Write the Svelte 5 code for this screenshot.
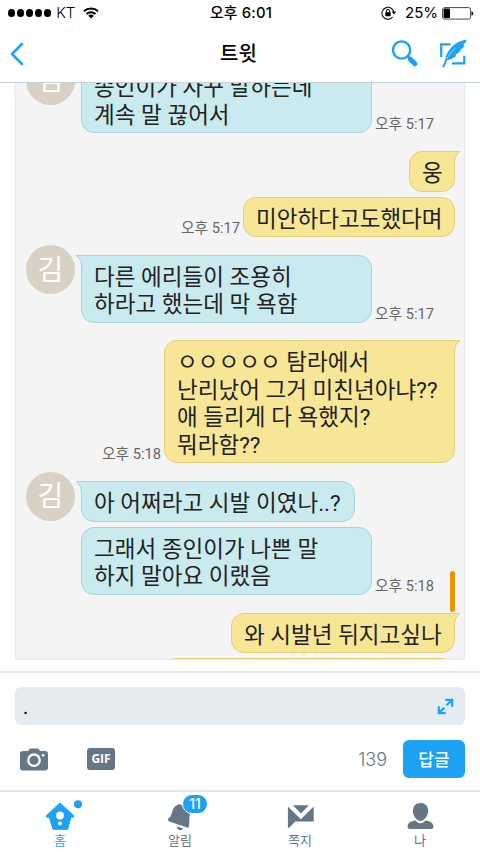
<script>
  const messages = [
    { side: 'left', gap: 0, avatar: true, tail: true, width: 291, lines: ['종인이가 자꾸 말하는데', '계속 말 끊어서'], time: '오후 5:17' },
    { side: 'right', gap: 18, tail: true, width: 46, lines: ['웅'] },
    { side: 'right', gap: 5, width: 212, lines: ['미안하다고도했다며'], time: '오후 5:17' },
    { side: 'left', gap: 17.5, avatar: true, tail: true, width: 291, lines: ['다른 에리들이 조용히', '하라고 했는데 막 욕함'], time: '오후 5:17' },
    { side: 'right', gap: 17.5, tail: true, width: 291, lines: ['ㅇㅇㅇㅇㅇ 탐라에서', '난리났어 그거 미친년아냐??', '애 들리게 다 욕했지?', '뭐라함??'], time: '오후 5:18' },
    { side: 'left', gap: 18, avatar: true, tail: true, width: 274, lines: ['아 어쩌라고 시발 이였나..?'] },
    { side: 'left', gap: 5, width: 291, lines: ['그래서 종인이가 나쁜 말', '하지 말아요 이랬음'], time: '오후 5:18' },
    { side: 'right', gap: 18, tail: true, width: 224, lines: ['와 시발년 뒤지고싶나'] },
    { side: 'right', gap: 5, width: 292, lines: [''] }
  ];
</script>

<div class="screen">
  <div class="status">
    <div class="carrier">
      <span class="dots"><i></i><i></i><i></i><i></i><i></i></span>
      <span class="kt">KT</span>
      <svg width="16" height="12" viewBox="0 0 16 12">
        <path d="M1 4.3A10.3 10.3 0 0 1 15 4.3M3.5 7A6.6 6.6 0 0 1 12.5 7" fill="none" stroke="#000" stroke-width="1.9" />
        <path d="M8 11.6 5.2 8.8A4 4 0 0 1 10.8 8.8Z" />
      </svg>
    </div>
    <div class="clock">오후 6:01</div>
    <div class="power">
      <svg width="16" height="14" viewBox="0 0 16 14">
        <path d="M11.6 11.2A6 6 0 1 1 13 7.3" fill="none" stroke="#111" stroke-width="1.1" />
        <path d="M10.6 5.6h4.6L13 8.6z" />
        <rect x="4.300" y="6.200" width="5.400" height="4" rx=".5" />
        <path d="M5.400 6.400V5a1.600 1.600 0 0 1 3.200 0v1.400" fill="none" stroke="#000" stroke-width="1" />
      </svg>
      <span class="percent">25%</span>
      <svg width="32" height="13" viewBox="0 0 32 13">
        <rect x=".6" y=".6" width="28" height="11.500" rx="2" fill="none" stroke="#333" stroke-width=".9" />
        <rect x="1.600" y="1.600" width="6.400" height="9.500" rx="1" />
        <path d="M29.500 4.200q1.800.5 1.800 2.200t-1.800 2.200z" />
      </svg>
    </div>
  </div>

  <header>
    <svg class="back" width="14" height="24" viewBox="0 0 14 24">
      <path d="M12 2 2 12 12 22" fill="none" stroke="#1da1f2" stroke-width="2.600" stroke-linecap="round" stroke-linejoin="round" />
    </svg>
    <h1>트윗</h1>
    <div class="tools">
      <svg width="26" height="27" viewBox="0 0 26 27">
        <circle cx="9.600" cy="10" r="8.600" fill="none" stroke="#1da1f2" stroke-width="2.400" />
        <path d="M15.700 16 18.500 19" stroke="#1da1f2" stroke-width="2.600" />
        <path d="M18.600 19.400 22.900 23.800" stroke="#1da1f2" stroke-width="5" stroke-linecap="round" />
      </svg>
      <svg width="28" height="29" viewBox="0 0 28 29">
        <path d="M11.500 5.400H2.200V18M25.300 16.800V24.300H13" fill="none" stroke="#1da1f2" stroke-width="2.200" />
        <path d="M27.600.6C20.800 1.800 15 5 10.900 10.200 7.300 14.500 6.700 18 6.300 20.600L3.200 28.100 5.100 28.400 8.200 21.200C12 20.500 15.500 18.700 17.700 16.400L15.900 16C19 14.600 21.200 12.900 22.200 11.100L20.600 10.900C23.300 9.600 24.800 8.200 25.500 6.400L24.100 6.100C26.100 4.700 27.300 2.900 27.600.6Z" fill="#1da1f2" />
        <path d="M7.700 20C9.900 15.800 12.900 12 16.600 8.900" fill="none" stroke="#fff" stroke-width=".6" />
      </svg>
    </div>
  </header>

  <main>
    <div class="chat">
      {#each messages as m}
        <div class="row {m.side}" style:margin-top="{m.gap}px">
          {#if m.avatar}<div class="avatar"><span>김</span></div>{/if}
          <div class="bubble" class:tailed={m.tail} style:width="{m.width}px">
            {#each m.lines as line}<div class="line">{line}</div>{/each}
            {#if m.tail}
              <svg class="tail" width="8" height="16" viewBox="0 0 8 16">
                <path class="tail-fill" d="M8 .5H1Q6.500 4 6.500 12V16H8Z" />
                <path class="tail-edge" d="M8 .5H1Q6.500 4 6.500 12V16" fill="none" />
              </svg>
            {/if}
          </div>
          {#if m.time}<time>{m.time}</time>{/if}
        </div>
      {/each}
      <div class="scrollbar"></div>
    </div>
  </main>

  <section class="composer">
    <div class="field">
      <span>.</span>
      <svg width="17" height="17" viewBox="0 0 17 17">
        <path d="M8.300 1.800h6.900v6.900M14.800 2.200 9.700 7.300M1.800 8.300v6.900h6.900M2.200 14.800 7.300 9.700" fill="none" stroke="#1da1f2" stroke-width="2.200" />
      </svg>
    </div>
    <div class="actions">
      <svg width="28" height="23" viewBox="0 0 28 23">
        <path d="M3 3h5l1.200-1.800Q9.600.5 10.500.5h7q.9 0 1.300.7L20 3h5q3 0 3 3v13.500q0 3-3 3H3q-3 0-3-3V6q0-3 3-3Z" fill="#657786" />
        <circle cx="14" cy="12.200" r="5.700" fill="none" stroke="#fff" stroke-width="2.300" />
        <circle cx="23.100" cy="7.300" r="1.400" fill="#fff" />
      </svg>
      <span class="gif">GIF</span>
      <span class="count">139</span>
      <button>답글</button>
    </div>
  </section>

  <nav>
    <div class="tab active">
      <svg width="44" height="32" viewBox="0 0 44 32">
        <path d="M22 4 36 17 34.700 18.600 33 17.800 29.700 30.300H15.200L11.100 18 9.300 18.600 8 17Z" fill="#1da1f2" stroke="#1da1f2" stroke-linejoin="round" />
        <circle cx="22" cy="16.500" r="3.900" fill="#fff" />
        <circle cx="22" cy="24.500" r="1.900" fill="#fff" />
        <circle cx="40" cy="5.200" r="4" fill="#1da1f2" />
      </svg>
      <span>홈</span>
    </div>
    <div class="tab">
      <svg width="44" height="32" viewBox="0 0 44 32">
        <path d="M10.300 19.600C15.500 16.400 12.500 8.500 20.300 5.400 22.100 4.700 25.500 7 27 8L32 15C30.800 19 31.800 22.500 31 27.400Q30.600 29 29 28.400L10.800 22.200Q9 20.900 10.300 19.600Z" fill="#657786" />
        <path d="M18.600 27.200 25.200 29.600Q23.800 31.900 21.300 31 18.800 30 18.600 27.200Z" fill="#657786" />
      </svg>
      <b class="badge">11</b>
      <span>알림</span>
    </div>
    <div class="tab">
      <svg width="44" height="32" viewBox="0 0 44 32">
        <path d="M9.900 7.500 22.800 20.300 35.700 7.500V22.500H17.300L11.100 28.700Q9.900 29.300 9.900 28Z" fill="#657786" />
        <path d="M15 6.200H31L22.800 14.400Z" fill="#657786" />
      </svg>
      <span>쪽지</span>
    </div>
    <div class="tab">
      <svg width="44" height="32" viewBox="0 0 44 32">
        <path d="M22.500 4c5 0 7.600 3.400 7.600 8.200 0 4.300-3.600 9.800-7.600 9.800s-7.600-5.500-7.600-9.800C14.900 7.400 17.500 4 22.500 4Z" fill="#657786" />
        <path d="M17.300 21.500Q22.500 27 27.500 21.500C32.500 22.200 35.400 23.800 35.400 28Q35.400 30 33.400 30H11.600Q9.600 30 9.600 28C9.600 23.800 12.500 22.200 17.300 21.500Z" fill="#657786" />
      </svg>
      <span>나</span>
    </div>
  </nav>
</div>

<style>
  :global(body) { margin: 0; background: #fff; }
  .screen { width: 480px; height: 854px; display: flex; flex-direction: column; overflow: hidden; background: #fff; font-family: Inter, "Noto Sans CJK KR", sans-serif; color: #000; }
  svg { display: block; flex: none; }
  .status { height: 26px; display: grid; grid-template-columns: 1fr auto 1fr; align-items: center; padding: 0 6px 0 8px; flex: none; }
  .carrier, .power { display: flex; align-items: center; }
  .dots { display: flex; gap: 1.8px; }
  .dots i { width: 7.2px; height: 7.2px; border-radius: 50%; background: #000; }
  .kt { font-size: 15px; margin: 0 8px 0 5px; line-height: 20px; font-weight: 300; }
  .clock { font-size: 14.8px; line-height: 20px; font-weight: 500; letter-spacing: .2px; }
  .power { justify-content: flex-end; }
  .percent { font-size: 15px; margin: 0 4px 0 8px; line-height: 20px; }
  header { height: 57px; box-sizing: border-box; flex: none; display: grid; grid-template-columns: 1fr auto 1fr; align-items: center; padding: 0 13px 1px 10px; border-bottom: 1px solid #c3d2de; }
  h1 { margin: 0; font-size: 20px; line-height: 28px; font-weight: 500; }
  .tools { display: flex; justify-content: flex-end; align-items: center; gap: 21px; }
  main { height: 590px; flex: none; padding: 0 15px; box-sizing: border-box; border-bottom: 2px solid #e1e8ed; }
  .chat { position: relative; height: 577px; overflow: hidden; box-sizing: border-box; background: #f4f4f4; border: solid #e4eaee; border-width: 0 1px 1px; padding: 0 9px 0 10px; display: flex; flex-direction: column; }
  .row { display: flex; align-items: flex-end; flex: none; position: relative; }
  .row:first-child { margin-top: -18px !important; }
  .row.left { padding-left: 55px; }
  .row.right { flex-direction: row-reverse; }
  .avatar { position: absolute; left: 0; top: -9.5px; width: 49px; height: 49px; border-radius: 50%; background: #d9d1c4; color: #fff; display: flex; align-items: center; justify-content: center; font: 28px/40px "Noto Sans CJK KR", sans-serif; }
  .avatar span { margin-top: -4px; }
  .bubble { --fill: #c9eaee; --edge: #a9d5da; position: relative; box-sizing: border-box; border: 1px solid var(--edge); border-radius: 13px; background: var(--fill); padding: 8px 0 3px 12px; font: 22.5px/27.5px Roboto, "Noto Sans CJK KR", sans-serif; letter-spacing: .03px; color: #222; white-space: nowrap; }
  .right .bubble { --fill: #f7e695; --edge: #e6cf78; }
  .line { height: 27.5px; }
  .left .tailed { border-top-left-radius: 0; }
  .right .tailed { border-top-right-radius: 0; }
  .tail { position: absolute; top: -1px; left: -7px; }
  .right .tail { left: auto; right: -7px; transform: scaleX(-1); }
  .tail-fill { fill: var(--fill); }
  .tail-edge { stroke: var(--edge); stroke-width: 1; }
  time { font: 14.7px/18px Roboto, "Noto Sans CJK KR", sans-serif; color: #666; margin: 0 3px 0 3px; white-space: nowrap; }
  .scrollbar { position: absolute; right: 9px; top: 488px; width: 5px; height: 41px; border-radius: 3px; background: #e69500; }
  .composer { height: 119px; flex: none; padding: 14px 15px 0; box-sizing: border-box; border-bottom: 2px solid #e1e8ed; }
  .field { height: 38px; box-sizing: border-box; border-radius: 6px; background: #e6ebef; display: flex; align-items: center; justify-content: space-between; padding: 0 11px 0 8px; font: 20px/24px Roboto, sans-serif; }
  .field span { padding-top: 1px; }
  .actions { display: flex; align-items: center; height: 38px; margin-top: 15px; padding-left: 5px; }
  .gif { width: 28px; height: 22px; border-radius: 3px; background: #657786; color: #fff; font: 700 12px/22px "Open Sans", sans-serif; text-align: center; margin-left: 39px; }
  .count { margin-left: auto; margin-right: 16px; font-size: 18px; font-weight: 300; color: #657786; }
  button { width: 62px; height: 38px; border: 0; border-radius: 6px; background: #1da1f2; color: #fff; padding: 0; font: 500 17px/38px "Noto Sans CJK KR", sans-serif; }
  nav { height: 62px; flex: none; display: grid; grid-template-columns: repeat(4, 1fr); }
  .tab { position: relative; display: flex; flex-direction: column; align-items: center; padding-top: 7px; color: #657786; font: 13px/19px "Noto Sans CJK KR", sans-serif; }
  .tab span { margin-top: -1px; }
  .active { color: #1da1f2; }
  .badge { position: absolute; left: 62px; top: 2px; width: 24px; height: 18px; border: 1px solid #fff; border-radius: 10px; background: #1da1f2; color: #fff; text-align: center; font: 500 14px/18px Inter, sans-serif; }
</style>
